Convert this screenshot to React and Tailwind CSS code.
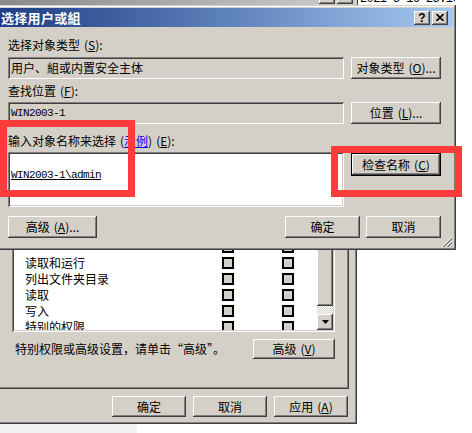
import React from "react";

function Btn({ children, className = "", def = false }) {
  if (def) {
    return (
      <div className={"border border-black bg-[#d4d0c8] " + className}>
        <div className="w-full h-full flex items-center justify-center shadow-[inset_-1px_-1px_#404040,inset_1px_1px_#ffffff,inset_-2px_-2px_#808080,inset_2px_2px_#d4d0c8] text-[12px] leading-[14px] text-black whitespace-nowrap">
          {children}
        </div>
      </div>
    );
  }
  return (
    <div
      className={
        "bg-[#d4d0c8] flex items-center justify-center shadow-[inset_-1px_-1px_#404040,inset_1px_1px_#ffffff,inset_-2px_-2px_#808080,inset_2px_2px_#d4d0c8] text-[12px] leading-[14px] text-black whitespace-nowrap " +
        className
      }
    >
      {children}
    </div>
  );
}

function Key({ k }) {
  return (
    <span className="ml-[4px]">
      (<span className="underline">{k}</span>)
    </span>
  );
}

function Grip() {
  return (
    <svg width="12" height="12" viewBox="0 0 12 12" className="absolute right-[3px] bottom-[2px]">
      <path d="M11 1 L1 11" stroke="#ffffff" strokeWidth="1" />
      <path d="M11 2 L2 11" stroke="#808080" strokeWidth="1" />
      <path d="M11 3 L3 11" stroke="#808080" strokeWidth="1" />
      <path d="M11 5 L5 11" stroke="#ffffff" strokeWidth="1" />
      <path d="M11 6 L6 11" stroke="#808080" strokeWidth="1" />
      <path d="M11 7 L7 11" stroke="#808080" strokeWidth="1" />
      <path d="M11 9 L9 11" stroke="#ffffff" strokeWidth="1" />
      <path d="M11 10 L10 11" stroke="#808080" strokeWidth="1" />
    </svg>
  );
}

function Check() {
  return <div className="w-[12px] h-[12px] border-2 border-black bg-[#d4d0c8] shrink-0" />;
}

function PermRow({ name }) {
  return (
    <div className="h-[16px] flex items-center shrink-0">
      <div className="w-[197px] text-[12px] leading-[14px] text-black whitespace-nowrap">{name}</div>
      <Check />
      <div className="w-[48px]" />
      <Check />
    </div>
  );
}

export default function App() {
  const perms = ["", "", "读取和运行", "列出文件夹目录", "读取", "写入", "特别的权限"];
  return (
    <div className="relative w-[472px] h-[433px] overflow-hidden bg-white font-['Noto_Sans_CJK_SC',sans-serif] text-black">
      {/* top strip (window behind) */}
      <div className="absolute left-0 top-0 w-[455px] h-[6px] bg-gradient-to-r from-[#8a8a8a] to-[#e2e2e2] overflow-hidden">
        <div className="absolute left-[319px] top-[-10px] w-[16px] h-[14px] bg-[#d4d0c8] shadow-[inset_-1px_-1px_#404040,inset_1px_1px_#ffffff,inset_-2px_-2px_#808080]" />
        <div className="absolute left-[337px] top-[-10px] w-[16px] h-[14px] bg-[#d4d0c8] shadow-[inset_-1px_-1px_#404040,inset_1px_1px_#ffffff,inset_-2px_-2px_#808080]" />
        <div className="absolute left-[357px] top-0 w-[98px] h-[6px] bg-white border-l border-[#404040] overflow-hidden">
          <div className="absolute left-[2px] top-[-8px] text-[12px] leading-[14px] font-['Liberation_Mono',monospace] tracking-[-0.6px] text-black whitespace-nowrap">
            2021-5-16 23:10
          </div>
        </div>
      </div>

      {/* background window */}
      <div className="absolute left-[-10px] top-[200px] w-[367px] h-[224px] bg-[#d4d0c8] p-[3px] flex flex-col shadow-[inset_-1px_-1px_#404040,inset_1px_1px_#d4d0c8,inset_-2px_-2px_#808080,inset_2px_2px_#ffffff]">
        <div className="mr-[5px] flex flex-col pl-[19px] pr-[14px] pt-[10px] pb-[30px] shadow-[inset_1px_1px_#ffffff,inset_-1px_-1px_#404040,inset_-2px_-2px_#808080]">
          <div className="h-[119px] p-[2px] flex shadow-[inset_1px_1px_#808080,inset_-1px_-1px_#ffffff,inset_2px_2px_#404040,inset_-2px_-2px_#d4d0c8]">
            <div className="flex-1 bg-white overflow-hidden pt-[8px] pl-[11px] flex flex-col">
              {perms.map((p, i) => (
                <PermRow key={i} name={p} />
              ))}
            </div>
            <div className="w-[16px] flex flex-col">
              <Btn className="h-[16px] shrink-0">
                <svg width="7" height="4" viewBox="0 0 7 4">
                  <path d="M3.5 0 L7 4 L0 4 Z" fill="#000" />
                </svg>
              </Btn>
              <Btn className="flex-1" />
              <div className="h-[8px] shrink-0 bg-[repeating-conic-gradient(#d4d0c8_0%_25%,#ffffff_0%_50%)] bg-[length:2px_2px]" />
              <Btn className="h-[16px] shrink-0">
                <svg width="7" height="4" viewBox="0 0 7 4">
                  <path d="M0 0 L7 0 L3.5 4 Z" fill="#000" />
                </svg>
              </Btn>
            </div>
          </div>
          <div className="mt-[7px] flex items-center justify-between">
            <div className="pl-[3px] text-[12px] leading-[14px] whitespace-nowrap">特别权限或高级设置，请单击“高级”。</div>
            <Btn className="w-[82px] h-[20px]">
              高级<Key k="V" />
            </Btn>
          </div>
        </div>
        <div className="mt-[7px] pr-[6px] flex justify-end gap-[7px]">
          <Btn className="w-[74px] h-[21px]">确定</Btn>
          <Btn className="w-[74px] h-[21px]">取消</Btn>
          <Btn className="w-[74px] h-[21px]">
            应用<Key k="A" />
          </Btn>
        </div>
      </div>

      {/* bottom strip */}
      <div className="absolute left-0 top-[424px] w-[137px] h-[9px] bg-[#f2f2f2]" />

      {/* top dialog */}
      <div className="absolute left-[-4px] top-[5px] w-[460px] h-[245px] bg-[#d4d0c8] p-[3px] flex flex-col shadow-[inset_-1px_-1px_#404040,inset_1px_1px_#d4d0c8,inset_-2px_-2px_#808080,inset_2px_2px_#ffffff]">
        <div className="h-[19px] shrink-0 flex items-center justify-between pl-[2px] pr-[5px] bg-gradient-to-r from-[#1f3d85] to-[#a6caf0]">
          <div className="text-white font-bold text-[13px] leading-[15px] tracking-[0.3px] whitespace-nowrap">选择用户或組</div>
          <div className="flex gap-[2px]">
            <Btn className="w-[16px] h-[14px]">
              <span className="font-['Liberation_Sans',sans-serif] font-bold text-[12px] leading-[12px] mt-[1px]">?</span>
            </Btn>
            <Btn className="w-[16px] h-[14px]">
              <svg width="8" height="7" viewBox="0 0 8 7">
                <path d="M0.5 0 L7.5 7 M7.5 0 L0.5 7" stroke="#000" strokeWidth="1.6" />
              </svg>
            </Btn>
          </div>
        </div>
        <div className="flex-1 flex flex-col pl-[9px] pr-[12px]">
          <div className="mt-[11px] text-[12px] leading-[14px] whitespace-nowrap">
            选择对象类型<Key k="S" />:
          </div>
          <div className="mt-[5px] flex gap-[7px] h-[22px]">
            <div className="flex-1 flex items-center pl-[3px] text-[12px] leading-[14px] shadow-[inset_1px_1px_#808080,inset_-1px_-1px_#ffffff,inset_2px_2px_#404040,inset_-2px_-2px_#d4d0c8]">
              用户、組或内置安全主体
            </div>
            <Btn className="w-[90px]">
              对象类型<Key k="O" />...
            </Btn>
          </div>
          <div className="mt-[5px] text-[12px] leading-[14px] whitespace-nowrap">
            查找位置<Key k="F" />:
          </div>
          <div className="mt-[4px] flex gap-[7px] h-[22px]">
            <div className="flex-1 flex items-center pl-[3px] text-[11px] leading-[14px] font-['Liberation_Mono',monospace] tracking-[-0.6px] shadow-[inset_1px_1px_#808080,inset_-1px_-1px_#ffffff,inset_2px_2px_#404040,inset_-2px_-2px_#d4d0c8]">
              WIN2003-1
            </div>
            <Btn className="w-[90px]">
              位置<Key k="L" />...
            </Btn>
          </div>
          <div className="mt-[10px] text-[12px] leading-[14px] whitespace-nowrap">
            输入对象名称来选择<span className="ml-[4px]">(<span className="text-[#0000ff] underline">示例</span>)</span><Key k="E" />:
          </div>
          <div className="mt-[4px] flex gap-[7px] items-start">
            <div className="flex-1 h-[55px] bg-white pl-[3px] pt-[7px] shadow-[inset_1px_1px_#808080,inset_-1px_-1px_#ffffff,inset_2px_2px_#404040,inset_-2px_-2px_#d4d0c8]">
              <span className="text-[11px] leading-[14px] font-['Liberation_Mono',monospace] tracking-[-0.6px] underline">WIN2003-1\admin</span>
            </div>
            <Btn def className="w-[90px] h-[23px] mt-[1px]">
              检查名称<Key k="C" />
            </Btn>
          </div>
          <div className="mt-[9px] flex h-[22px]">
            <Btn className="w-[89px]">
              高级<Key k="A" />...
            </Btn>
            <div className="flex-1" />
            <Btn className="w-[75px]">确定</Btn>
            <div className="w-[6px]" />
            <Btn className="w-[75px]">取消</Btn>
          </div>
        </div>
        <Grip />
      </div>

      {/* red annotation boxes */}
      <div className="absolute left-0 top-[120px] w-[135px] h-[77px] border-[7px] border-[#ff3b3b]" />
      <div className="absolute left-[331px] top-[146px] w-[131px] h-[51px] border-[7px] border-[#ff3b3b]" />
    </div>
  );
}
